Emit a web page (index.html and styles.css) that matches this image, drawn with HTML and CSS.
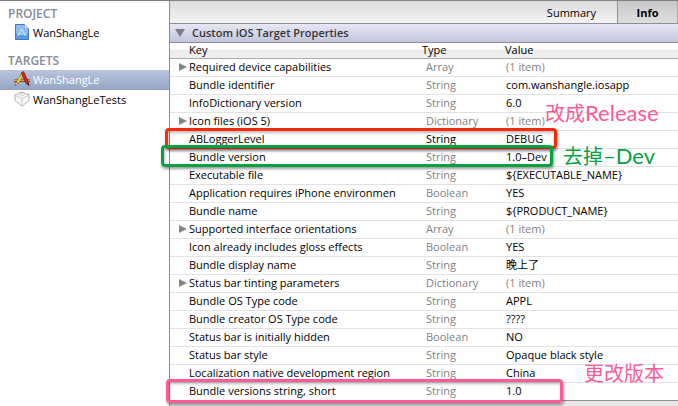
FILE: index.html
```html
<!DOCTYPE html>
<html lang="en">
<head>
<meta charset="utf-8">
<title>WanShangLe</title>
<link rel="stylesheet" href="styles.css">
</head>
<body>
<div class="editor">
  <nav class="sidebar">
    <h2>PROJECT</h2>
    <a class="item" href="#project">
      <svg class="icon" viewBox="0 0 16 16" aria-hidden="true">
        <path d="M1.500 .5h9l4 4v11h-13z" fill="#5a9be0" stroke="#4379b8"/>
        <path d="M2 1h8v4h4v4H2z" fill="#8dbdf0"/>
        <path d="M10.500 .5v4h4z" fill="#e3effb" stroke="#7da6d3" stroke-width=".6"/>
        <path d="M4 12 7.800 5l3.700 7M3 10h10" fill="none" stroke="#d4e8fc" stroke-width="1"/>
      </svg>
      <span>WanShangLe</span>
    </a>
    <h2>TARGETS</h2>
    <a class="item selected" href="#app">
      <svg class="icon" viewBox="0 0 16 16" aria-hidden="true">
        <path d="M0 9.500h16" stroke="#6b4420" stroke-width="3"/>
        <path d="M0 9.300h16" stroke="#d3a76e" stroke-width="1.600"/>
        <path d="M9 2.500 3.300 12" stroke="#8a5a10" stroke-width="3"/>
        <path d="M9 2.500 3.500 11.700" stroke="#f6d54d" stroke-width="2"/>
        <path d="M2.300 11 1 15l3.500-2.700z" fill="#f4dfb8" stroke="#5b3b16" stroke-width=".5"/>
        <path d="m8.300 1 5 11" stroke="#7c0f0a" stroke-width="3.200"/>
        <path d="m8.300 1 4.800 10.800" stroke="#d72a1d" stroke-width="2"/>
        <path d="m12 12.500 2.700-1 .8 4z" fill="#4c1b12"/>
      </svg>
      <span>WanShangLe</span>
    </a>
    <a class="item" href="#tests">
      <svg class="icon" viewBox="0 0 16 16" aria-hidden="true">
        <path d="M1 3.500 4.500 3l1-1.500h5l1 1.500 3.500.5v6L8 15.300 1 9.500z" fill="#f7f7f7" stroke="#a9a9a9" stroke-width=".9" stroke-linejoin="round"/>
        <path d="m1.500 4.500 6.500 3 6.500-3M8 7.500V15" fill="none" stroke="#c4c4c4" stroke-width=".9"/>
        <ellipse cx="8" cy="3.700" rx="2.300" ry="1.100" fill="#fff" stroke="#bdbdbd" stroke-width=".7"/>
      </svg>
      <span>WanShangLeTests</span>
    </a>
  </nav>
  <main class="content">
    <div class="tabs">
      <button type="button" class="tab">Summary</button>
      <button type="button" class="tab active">Info</button>
    </div>
    <button type="button" class="section" aria-expanded="true"><i class="down"></i>Custom iOS Target Properties</button>
    <table>
      <colgroup><col class="c-key"><col class="c-type"><col></colgroup>
      <thead><tr><th>Key</th><th>Type</th><th>Value</th></tr></thead>
      <tbody>
        <tr class="group"><td><button type="button" aria-label="Expand"></button>Required device capabilities</td><td>Array</td><td>(1 item)</td></tr>
        <tr><td>Bundle identifier</td><td>String</td><td>com.wanshangle.iosapp</td></tr>
        <tr><td>InfoDictionary version</td><td>String</td><td>6.0</td></tr>
        <tr class="group"><td><button type="button" aria-label="Expand"></button>Icon files (iOS 5)</td><td>Dictionary</td><td>(1 item)</td></tr>
        <tr class="current"><td>ABLoggerLevel</td><td>String</td><td>DEBUG</td></tr>
        <tr><td>Bundle version</td><td>String</td><td>1.0–Dev</td></tr>
        <tr><td>Executable file</td><td>String</td><td>${EXECUTABLE_NAME}</td></tr>
        <tr><td>Application requires iPhone environment</td><td>Boolean</td><td>YES</td></tr>
        <tr><td>Bundle name</td><td>String</td><td>${PRODUCT_NAME}</td></tr>
        <tr class="group"><td><button type="button" aria-label="Expand"></button>Supported interface orientations</td><td>Array</td><td>(1 item)</td></tr>
        <tr><td>Icon already includes gloss effects</td><td>Boolean</td><td>YES</td></tr>
        <tr><td>Bundle display name</td><td>String</td><td>晚上了</td></tr>
        <tr class="group"><td><button type="button" aria-label="Expand"></button>Status bar tinting parameters</td><td>Dictionary</td><td>(1 item)</td></tr>
        <tr><td>Bundle OS Type code</td><td>String</td><td>APPL</td></tr>
        <tr><td>Bundle creator OS Type code</td><td>String</td><td>????</td></tr>
        <tr><td>Status bar is initially hidden</td><td>Boolean</td><td>NO</td></tr>
        <tr><td>Status bar style</td><td>String</td><td>Opaque black style</td></tr>
        <tr><td>Localization native development region</td><td>String</td><td>China</td></tr>
        <tr><td>Bundle versions string, short</td><td>String</td><td>1.0</td></tr>
      </tbody>
    </table>
  </main>
  <div class="mark mark-level"></div>
  <div class="mark mark-version"></div>
  <div class="mark mark-short"></div>
  <p class="note note-level">改成<span>Release</span></p>
  <p class="note note-version">去掉<span>–Dev</span></p>
  <p class="note note-short">更改版本</p>
</div>
</body>
</html>
```
FILE: styles.css
```css
* { box-sizing: border-box; }

body {
  margin: 0;
  background: #e8e8e8;
  color: #000;
  font: 11px/17px "Open Sans", "Noto Sans CJK SC", sans-serif;
}

button {
  margin: 0;
  padding: 0;
  border: 0;
  background: none;
  color: inherit;
  font: inherit;
}

.editor {
  position: relative;
  display: flex;
  min-height: 100vh;
  border-top: 1px solid #808080;
  overflow: hidden;
}

.sidebar {
  flex: 0 0 170px;
  padding-top: 3px;
  background: #fff;
  border-right: 1px solid #8c8c8c;
}

.sidebar h2 {
  margin: 0;
  padding-left: 8px;
  color: #7f8b98;
  font-size: 12px;
  font-weight: 600;
  line-height: 19px;
}

.item {
  display: flex;
  align-items: center;
  gap: 3px;
  height: 20px;
  padding: 0 0 2px 14px;
  color: #000;
  text-decoration: none;
}

.item + h2 { margin-top: 8px; }

.item.selected {
  background: linear-gradient(#b9c4dc, #95a4c6);
  color: #fff;
}

.icon { width: 16px; height: 16px; }

.content { flex: 1; min-width: 0; }

.tabs {
  display: flex;
  justify-content: flex-end;
  height: 23px;
  background: linear-gradient(#dcdcdc, #f3f3f3);
  border-bottom: 1px solid #8e8e8e;
}

.tab { width: 91px; }

.tab.active {
  width: 61px;
  background: linear-gradient(#c8c8c8, #dedede);
  border-left: 1px solid #8e8e8e;
  border-right: 1px solid #aaa;
  font-weight: 700;
}

.section {
  display: flex;
  align-items: center;
  gap: 7px;
  width: 100%;
  height: 19px;
  padding: 0 0 1px 5px;
  background: linear-gradient(#e6e8f5, #c2c5da);
  border-bottom: 1px solid #8e8e98;
  color: #333;
  font-weight: 600;
}

.down {
  border: 5px solid transparent;
  border-top: 8px solid #7d7d86;
  border-bottom: 0;
}

table {
  width: 100%;
  table-layout: fixed;
  border-spacing: 0;
  background: #fff;
  border-bottom: 1px solid #8e8e8e;
}

.c-key { width: 226px; }
.c-type { width: 109px; }

th, td {
  padding: 0;
  text-align: left;
  vertical-align: top;
  font-weight: 400;
  line-height: 16px;
  white-space: nowrap;
}

th {
  height: 16px;
  padding-left: 26px;
  background: linear-gradient(#fff 40%, #ebebeb 50%, #efefef);
  border-bottom: 1px solid #aaa;
  line-height: 14px;
}

th:first-child, td:first-child { padding-left: 19px; }
th:last-child { padding-left: 0; }
td:last-child { padding-left: 1px; }

td {
  height: 18px;
  border-bottom: 1px solid #e2e2e2;
}

tr:last-child td { height: 17px; border-bottom: 0; }

td:first-child { overflow: hidden; }
td:nth-child(2) { padding-left: 30px; color: #7f7f7f; }
.group td:last-child { color: #7f7f7f; }
.current td:nth-child(2) { color: #000; }

.group td:first-child { padding-left: 9px; }

.group button {
  display: block;
  float: left;
  width: 8px;
  height: 8px;
  margin: 4px 2px 0 0;
  background: #858585;
  clip-path: polygon(0 0, 100% 50%, 0 100%);
}

.mark {
  position: absolute;
  border: 3px solid;
  border-radius: 4px;
  box-shadow: 1px 2px 3px #0006, inset 1px 2px 3px #0004;
}

.mark-level { left: 165px; top: 127px; width: 392px; height: 21px; border-color: #fa2a08; }
.mark-version { left: 161px; top: 144px; width: 392px; height: 22px; border-color: #0a9f43; }
.mark-short { left: 166px; top: 378px; width: 397px; height: 24px; border-color: #fb5b98; }

.note {
  position: absolute;
  margin: 0;
  color: #fb5b98;
  font: 20px/22px Lato, "Noto Sans CJK SC", sans-serif;
  white-space: nowrap;
}

.note span { font-size: 22px; }

.note-level { left: 545px; top: 101px; }
.note-version { left: 563px; top: 144px; color: #0a9f43; }
.note-short { left: 584px; top: 361px; }
```
